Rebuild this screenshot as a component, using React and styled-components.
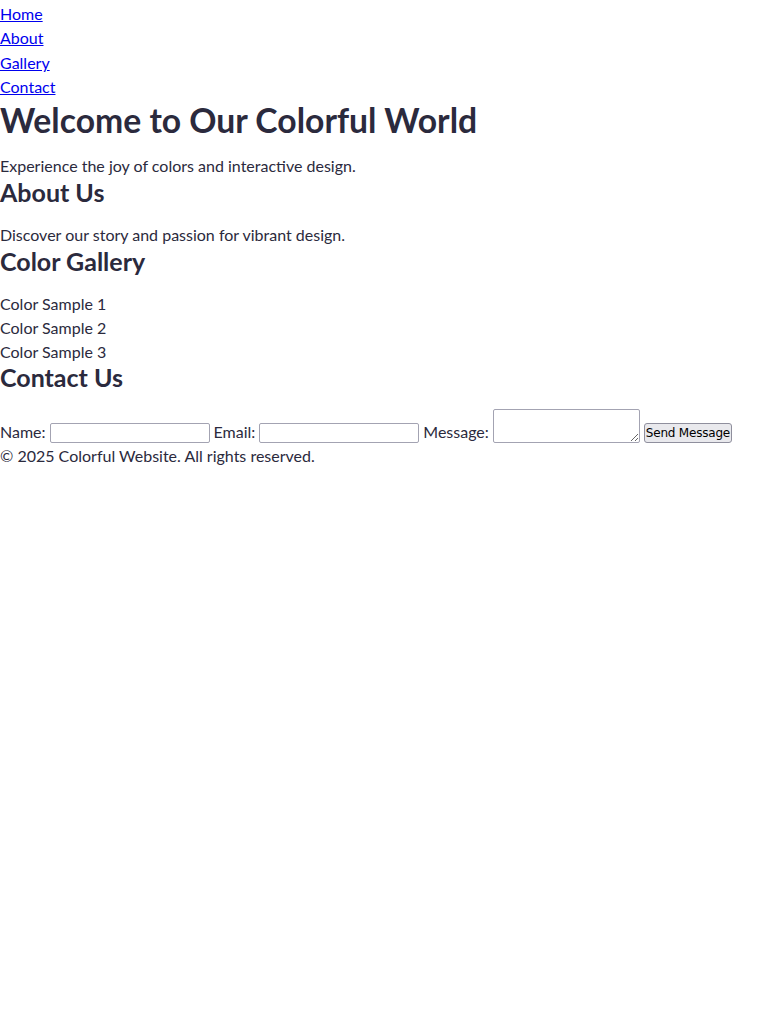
import React from 'react'
import styled, { createGlobalStyle } from 'styled-components'

const GlobalStyle = createGlobalStyle`
  body {
    margin: 0;
    font-family: Lato, "Open Sans", sans-serif;
    font-size: 16px;
    line-height: 24px;
    color: #2b2a3d;
    background: #fff;
  }
`

const Nav = styled.nav`
  padding-top: 2px;
  ul {
    list-style: none;
    margin: 0;
    padding: 0;
  }
  li {
    line-height: 24.4px;
  }
  a {
    color: #0000ee;
    text-decoration: underline;
  }
`

const Title = styled.h1`
  margin: 3px 0 17px;
  font-size: 33.7px;
  line-height: 34px;
  font-weight: 700;
`

const Heading = styled.h2`
  margin: ${p => p.$top ?? 2}px 0 0;
  font-size: 25px;
  line-height: 25px;
  font-weight: 700;
`

const Text = styled.p`
  margin: ${p => p.$top || 0}px 0 0;
`

const Section = styled.section``

const Samples = styled.div`
  margin-top: 18px;
`

const Form = styled.form`
  display: flex;
  align-items: flex-end;
  gap: 4px;
  margin-top: 18.5px;
`

const Label = styled.label`
  white-space: nowrap;
`

const Field = styled.input`
  box-sizing: border-box;
  width: 160px;
  height: 20px;
  margin: 0 0 1px;
  border: 1px solid #a3a3b2;
  border-radius: 2px;
  padding: 1px 2px;
  font: 13.3px "Liberation Sans", sans-serif;
`

const Area = styled.textarea`
  box-sizing: border-box;
  width: 147px;
  height: 34px;
  margin: 0 0 1px;
  border: 1px solid #a3a3b2;
  border-radius: 2px;
  padding: 2px;
  font: 13.3px "Liberation Mono", monospace;
`

const Button = styled.button`
  box-sizing: border-box;
  height: 20px;
  margin: 0 0 1px;
  padding: 0 1px;
  border: 1px solid #8f8f9d;
  border-radius: 3px;
  background: #e9e9ed;
  color: #000;
  font: 12px "DejaVu Sans", sans-serif;
  letter-spacing: -0.2px;
  line-height: 16px;
`

const Footer = styled.footer``

export default function App() {
  return (
    <>
      <GlobalStyle />
      <Nav>
        <ul>
          <li><a href="#home">Home</a></li>
          <li><a href="#about">About</a></li>
          <li><a href="#gallery">Gallery</a></li>
          <li><a href="#contact">Contact</a></li>
        </ul>
      </Nav>
      <Section id="home">
        <Title>Welcome to Our Colorful World</Title>
        <Text>Experience the joy of colors and interactive design.</Text>
      </Section>
      <Section id="about">
        <Heading>About Us</Heading>
        <Text $top={18.7}>Discover our story and passion for vibrant design.</Text>
      </Section>
      <Section id="gallery">
        <Heading>Color Gallery</Heading>
        <Samples>
          <div>Color Sample 1</div>
          <div>Color Sample 2</div>
          <div>Color Sample 3</div>
        </Samples>
      </Section>
      <Section id="contact">
        <Heading $top={1}>Contact Us</Heading>
        <Form onSubmit={e => e.preventDefault()}>
          <Label htmlFor="name">Name:</Label>
          <Field id="name" type="text" />
          <Label htmlFor="email">Email:</Label>
          <Field id="email" type="email" />
          <Label htmlFor="message">Message:</Label>
          <Area id="message" />
          <Button type="submit">Send Message</Button>
        </Form>
      </Section>
      <Footer>© 2025 Colorful Website. All rights reserved.</Footer>
    </>
  )
}
